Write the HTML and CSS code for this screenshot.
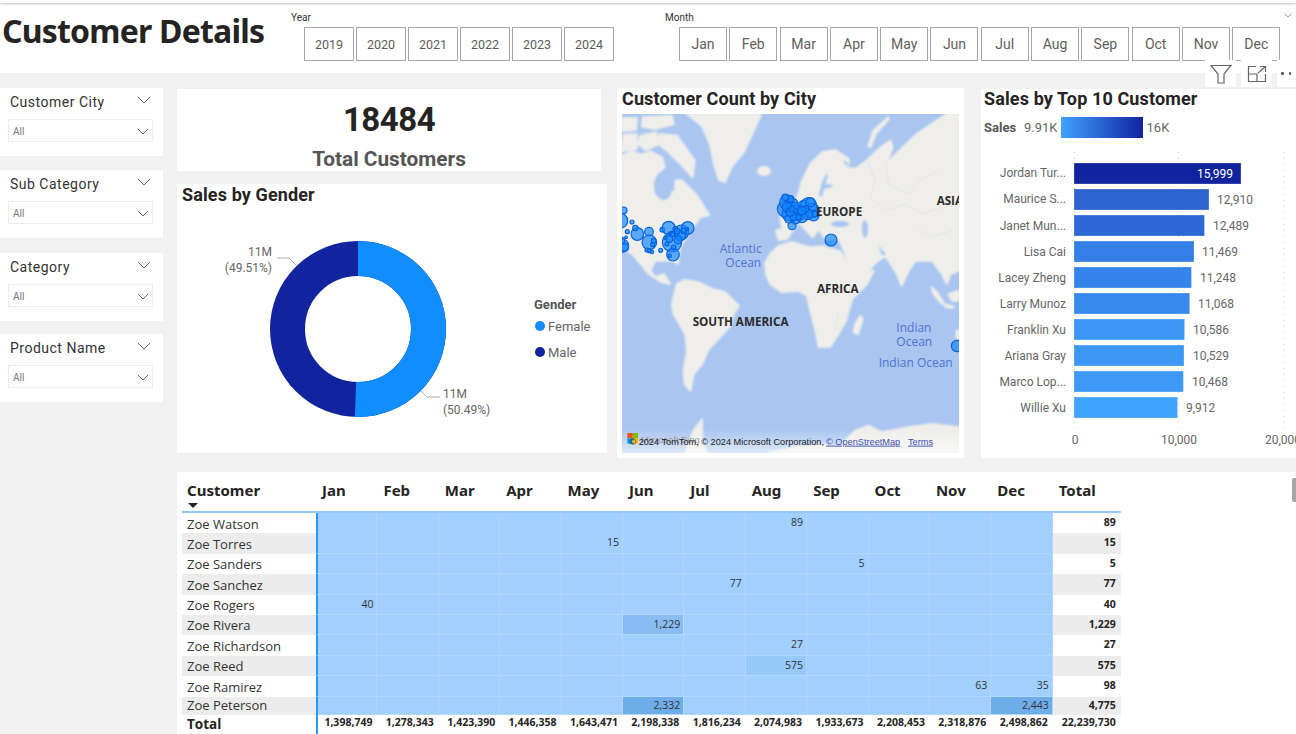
FILE: index.html
```html
<!DOCTYPE html>
<html lang="en">
<head>
<meta charset="utf-8">
<title>Customer Details</title>
<link rel="stylesheet" href="styles.css">
</head>
<body>
<div class="topstrip"></div>
<header class="header">
  <h1 class="page-title">Customer Details</h1>
  <section class="period period-year">
    <div class="period-label">Year</div>
    <div class="period-buttons">
      <div class="btn">2019</div><div class="btn">2020</div><div class="btn">2021</div><div class="btn">2022</div><div class="btn">2023</div><div class="btn">2024</div>
    </div>
  </section>
  <section class="period period-month">
    <div class="period-label">Month</div>
    <div class="period-buttons">
      <div class="btn">Jan</div><div class="btn">Feb</div><div class="btn">Mar</div><div class="btn">Apr</div><div class="btn">May</div><div class="btn">Jun</div><div class="btn">Jul</div><div class="btn">Aug</div><div class="btn">Sep</div><div class="btn">Oct</div><div class="btn">Nov</div><div class="btn">Dec</div>
    </div>
  </section>
  <svg class="header-chevron" width="8" height="5" viewBox="0 0 8 5"><polyline points="0.5,0.5 4,4 7.5,0.5"/></svg>
</header>

<div class="visual-tools">
  <div class="tool"><svg width="22" height="20" viewBox="0 0 22 20"><path d="M1 1.500H21L14 10V19H8V10Z"/></svg></div>
  <div class="tool"><svg width="20" height="18" viewBox="0 0 20 18"><path d="M9 1.500H1.500V16.500H18.500V9M1.500 9H10V16.500M11 8L18 2M13 1.500H18.500V7"/></svg></div>
  <div class="tool tool-more"><span class="dot"></span><span class="dot"></span><span class="dot"></span></div>
</div>

<main class="main">
  <aside class="sidebar">
    <div class="slicer">
      <div class="slicer-head"><span>Customer City</span><svg class="chev" width="14" height="8" viewBox="0 0 14 8"><polyline points="1,1 7,7 13,1"/></svg></div>
      <div class="slicer-box"><span>All</span><svg class="chev" width="12" height="7" viewBox="0 0 12 7"><polyline points="1,1 6,6 11,1"/></svg></div>
    </div>
    <div class="slicer">
      <div class="slicer-head"><span>Sub Category</span><svg class="chev" width="14" height="8" viewBox="0 0 14 8"><polyline points="1,1 7,7 13,1"/></svg></div>
      <div class="slicer-box"><span>All</span><svg class="chev" width="12" height="7" viewBox="0 0 12 7"><polyline points="1,1 6,6 11,1"/></svg></div>
    </div>
    <div class="slicer">
      <div class="slicer-head"><span>Category</span><svg class="chev" width="14" height="8" viewBox="0 0 14 8"><polyline points="1,1 7,7 13,1"/></svg></div>
      <div class="slicer-box"><span>All</span><svg class="chev" width="12" height="7" viewBox="0 0 12 7"><polyline points="1,1 6,6 11,1"/></svg></div>
    </div>
    <div class="slicer">
      <div class="slicer-head"><span>Product Name</span><svg class="chev" width="14" height="8" viewBox="0 0 14 8"><polyline points="1,1 7,7 13,1"/></svg></div>
      <div class="slicer-box"><span>All</span><svg class="chev" width="12" height="7" viewBox="0 0 12 7"><polyline points="1,1 6,6 11,1"/></svg></div>
    </div>
  </aside>

  <div class="content">
    <div class="upper">
      <div class="col-left">
        <section class="kpi">
          <div class="kpi-value">18484</div>
          <div class="kpi-label">Total Customers</div>
        </section>
        <section class="card gender">
          <h2 class="card-title">Sales by Gender</h2>
          <svg class="gender-svg" width="430" height="245" viewBox="0 0 430 245">
            <circle class="ring" cx="181" cy="121" r="70.500" stroke="#12239e"/>
            <circle class="ring" cx="181" cy="121" r="70.500" stroke="#118dff" stroke-dasharray="223.700 443" transform="rotate(-90 181 121)"/>
            <polyline class="leader" points="100,50 112,50 119,57"/>
            <polyline class="leader" points="244,183 250,189 263,189"/>
            <text class="donut-label" x="95" y="48" text-anchor="end">11M</text>
            <text class="donut-label" x="95" y="64" text-anchor="end">(49.51%)</text>
            <text class="donut-label" x="266" y="190">11M</text>
            <text class="donut-label" x="266" y="206">(50.49%)</text>
            <text class="legend-title" x="357" y="101">Gender</text>
            <circle cx="363" cy="118" r="5" fill="#118dff"/>
            <text class="legend-item" x="371" y="123">Female</text>
            <circle cx="363" cy="144" r="5" fill="#12239e"/>
            <text class="legend-item" x="371" y="149">Male</text>
          </svg>
        </section>
      </div>

      <section class="card map-card">
        <h2 class="card-title">Customer Count by City</h2>
        <svg class="map" width="337" height="339" viewBox="0 0 1011 1017">
          <defs>
            <filter id="soft" x="-5%" y="-5%" width="110%" height="110%"><feGaussianBlur stdDeviation="2.500"/></filter>
            <linearGradient id="creditFade" x1="0" y1="0" x2="0" y2="1"><stop offset="0" stop-color="#fff" stop-opacity="0"/><stop offset="1" stop-color="#fff" stop-opacity=".6"/></linearGradient>
            <clipPath id="mapClip"><rect width="1011" height="1017"/></clipPath>
          </defs>
          <rect class="sea" width="1011" height="1017"/>
          <g class="land" filter="url(#soft)">
            <path d="M195,0 L240,36 264,90 276,150 291,198 309,204 330,156 366,114 390,60 414,9 416,0Z"/>
            <ellipse cx="426" cy="171" rx="18" ry="12"/>
            <path d="M0,125 L30,112 60,122 85,112 120,130 128,160 104,180 92,205 98,240 125,262 138,252 137,228 160,235 160,200 178,198 205,225 225,245 250,285 262,303 235,310 220,330 205,350 175,400 170,425 168,450 150,440 100,440 85,470 100,490 125,480 135,495 144,510 120,505 80,480 40,430 0,395Z"/>
            <path d="M112,60 L165,65 218,140 212,190 180,155 140,115 108,88Z"/>
            <path d="M55,65 L102,55 108,92 70,108 50,90Z"/>
            <path d="M0,12 L45,12 42,48 0,50Z"/>
            <path d="M62,10 L150,5 155,30 100,45 60,38Z"/>
            <path d="M5,62 L44,60 45,104 0,112Z"/>
            <path d="M154,553 L165,510 189,498 230,505 270,525 310,535 350,575 335,600 325,635 285,680 260,705 240,750 215,780 205,830 188,810 185,770 195,710 190,660 155,600 150,570Z"/>
            <path d="M429,448 L445,420 470,395 510,385 564,400 604,397 654,412 672,440 695,483 755,470 735,510 690,555 680,590 672,620 655,650 625,698 590,698 578,640 565,590 555,545 530,530 480,535 445,510 432,480Z"/>
            <path d="M462,350 L500,338 515,345 495,375 470,378Z"/>
            <path d="M475,310 L500,310 505,335 480,340Z"/>
            <path d="M510,345 L505,300 534,225 538,205 565,150 600,115 640,108 680,135 680,152 660,160 700,165 734,140 770,105 805,80 812,100 792,150 830,112 884,60 944,20 974,0 1011,0 1011,470 985,480 975,510 960,480 930,440 880,440 860,470 839,515 825,480 800,440 790,425 762,445 740,470 694,492 672,425 660,395 650,375 610,375 590,345 572,370 530,325Z"/>
            <path d="M929,520 L945,535 968,572 958,568 935,540Z"/>
            <path d="M980,540 L1011,530 1011,560 990,560Z"/>
            <path d="M972,572 L995,578 990,582 970,578Z"/>
            <path d="M1005,650 L1011,648 1011,675 1003,670Z"/>
            <path d="M715,605 L722,615 708,660 695,655 700,630Z"/>
            <path d="M190,1017 L215,950 240,915 240,980 255,1017Z"/>
            <path d="M440,1017 L520,1000 620,992 650,1000 700,950 740,935 780,955 860,940 930,930 1011,940 1011,1017Z"/>
            <path d="M739,95 L754,50 799,10 800,16 762,58 745,100Z"/>
          </g>
          <g class="sea" filter="url(#soft)">
            <ellipse cx="654" cy="330" rx="28" ry="9"/>
            <ellipse cx="729" cy="345" rx="9" ry="26"/>
            <path d="M590,245 L600,205 612,180 618,185 610,210 630,212 632,218 606,225 600,248Z"/>
            <path d="M664,138 L684,150 670,154Z"/>
            <ellipse cx="125" cy="222" rx="26" ry="34"/>
            <path d="M770,395 L792,420 780,425Z"/>
          </g>
          <g class="map-lines">
            <path d="M735,140 L760,200 745,250 790,290 850,270 900,300 960,280"/>
            <path d="M792,150 L800,210 860,240 890,200 950,170"/>
            <path d="M880,340 L930,370 990,350"/>
            <path d="M650,590 L640,650 660,640"/>
            <path d="M230,600 L255,620 290,600"/>
          </g>
          <text class="ocean" x="293" y="418">Atlantic</text>
          <text class="ocean" x="310" y="460">Ocean</text>
          <text class="ocean" x="823" y="653">Indian</text>
          <text class="ocean" x="823" y="695">Ocean</text>
          <text class="ocean" x="770" y="758">Indian Ocean</text>
          <g class="bubbles" clip-path="url(#mapClip)">
            <circle cx="5" cy="289" r="10"/><circle cx="-5" cy="320" r="22"/><circle cx="30" cy="324" r="6"/><circle cx="16" cy="353" r="6"/><circle cx="46" cy="360" r="19"/><circle cx="40" cy="342" r="8"/><circle cx="81" cy="353" r="13"/><circle cx="82" cy="385" r="22"/><circle cx="95" cy="380" r="7"/><circle cx="92" cy="392" r="6"/><circle cx="75" cy="408" r="6"/><circle cx="82" cy="410" r="6"/><circle cx="90" cy="414" r="5"/><circle cx="116" cy="409" r="6"/><circle cx="121" cy="347" r="7"/><circle cx="140" cy="342" r="20"/><circle cx="178" cy="355" r="22"/><circle cx="197" cy="342" r="19"/><circle cx="150" cy="385" r="29"/><circle cx="153" cy="422" r="19"/><circle cx="143" cy="425" r="5"/><circle cx="175" cy="365" r="16"/><circle cx="160" cy="345" r="7"/><circle cx="195" cy="345" r="5"/><circle cx="130" cy="372" r="5"/><circle cx="150" cy="360" r="8"/><circle cx="155" cy="400" r="7"/><circle cx="135" cy="390" r="6"/><circle cx="165" cy="352" r="9"/><circle cx="185" cy="350" r="8"/><circle cx="143" cy="358" r="4"/><circle cx="168" cy="378" r="12"/><circle cx="142" cy="375" r="10"/><circle cx="0" cy="395" r="20"/><circle cx="8" cy="400" r="12"/><circle cx="-2" cy="380" r="10"/><circle cx="12" cy="370" r="4"/>
            <circle cx="490" cy="285" r="24"/><circle cx="495" cy="265" r="22"/><circle cx="500" cy="300" r="20"/><circle cx="515" cy="290" r="24"/><circle cx="510" cy="270" r="18"/><circle cx="530" cy="300" r="20"/><circle cx="545" cy="280" r="20"/><circle cx="560" cy="275" r="24"/><circle cx="570" cy="290" r="22"/><circle cx="575" cy="305" r="16"/><circle cx="555" cy="300" r="17"/><circle cx="540" cy="310" r="16"/><circle cx="520" cy="315" r="15"/><circle cx="510" cy="335" r="12"/><circle cx="500" cy="315" r="12"/><circle cx="525" cy="285" r="12"/><circle cx="535" cy="295" r="10"/><circle cx="505" cy="255" r="10"/><circle cx="580" cy="300" r="9"/><circle cx="550" cy="285" r="10"/><circle cx="565" cy="265" r="14"/><circle cx="490" cy="250" r="10"/><circle cx="515" cy="310" r="10"/><circle cx="495" cy="280" r="14"/><circle cx="505" cy="295" r="12"/><circle cx="520" cy="275" r="11"/><circle cx="540" cy="290" r="12"/><circle cx="510" cy="285" r="9"/><circle cx="530" cy="310" r="8"/>
            <circle cx="627" cy="378" r="18"/><circle cx="1005" cy="696" r="17"/>
          </g>
          <text class="region" x="582" y="305">EUROPE</text>
          <text class="region" x="944" y="272">ASIA</text>
          <text class="region" x="585" y="538">AFRICA</text>
          <text class="region" x="212" y="637">SOUTH AMERICA</text>
          <rect y="945" width="1011" height="72" fill="url(#creditFade)"/>
          <rect x="16" y="957" width="16" height="16" fill="#f25022"/><rect x="32" y="957" width="16" height="16" fill="#7fba00"/><rect x="16" y="973" width="16" height="16" fill="#00a4ef"/><rect x="32" y="973" width="16" height="16" fill="#ffb900"/>
          <text class="bing" x="56" y="986">Microsoft Bing</text>
          <text class="credit" x="22" y="992">© 2024 TomTom, © 2024 Microsoft Corporation,</text>
          <text class="credit-link" x="612" y="992">© OpenStreetMap</text>
          <text class="credit-link" x="858" y="992">Terms</text>
        </svg>
      </section>

      <section class="card bars-card">
        <h2 class="card-title">Sales by Top 10 Customer</h2>
        <div class="bars-legend">
          <span class="bars-legend-name">Sales</span>
          <span>9.91K</span>
          <span class="gradient"></span>
          <span>16K</span>
        </div>
        <svg class="bars-svg" width="315" height="312" viewBox="0 0 315 312">
          <g class="grid"><line x1="93.500" y1="7" x2="93.500" y2="285"/><line x1="197.500" y1="7" x2="197.500" y2="285"/><line x1="302.500" y1="7" x2="302.500" y2="285"/></g>
          <g class="bars">
            <rect x="93" y="18" width="167" height="21" fill="#12239e"/>
            <rect x="93" y="44" width="135" height="21" fill="#2c63cf"/>
            <rect x="93" y="70" width="130.500" height="21" fill="#2d69d4"/>
            <rect x="93" y="96" width="120" height="21" fill="#337fe6"/>
            <rect x="93" y="122" width="117.500" height="21" fill="#3584e9"/>
            <rect x="93" y="148" width="115.700" height="21" fill="#3789ec"/>
            <rect x="93" y="174" width="110.600" height="21" fill="#3c96f5"/>
            <rect x="93" y="200" width="110" height="21" fill="#3c97f5"/>
            <rect x="93" y="226" width="109.400" height="21" fill="#3d98f6"/>
            <rect x="93" y="252" width="103.600" height="21" fill="#40a2ff"/>
          </g>
          <g class="bar-names">
            <text x="85" y="32">Jordan Tur...</text><text x="85" y="58">Maurice S...</text><text x="85" y="85">Janet Mun...</text><text x="85" y="111">Lisa Cai</text><text x="85" y="137">Lacey Zheng</text><text x="85" y="163">Larry Munoz</text><text x="85" y="189">Franklin Xu</text><text x="85" y="215">Ariana Gray</text><text x="85" y="241">Marco Lop...</text><text x="85" y="267">Willie Xu</text>
          </g>
          <text class="bar-inside" x="252" y="33" text-anchor="end">15,999</text>
          <g class="bar-values">
            <text x="236" y="59">12,910</text><text x="232" y="85">12,489</text><text x="221" y="111">11,469</text><text x="219" y="137">11,248</text><text x="217" y="163">11,068</text><text x="212" y="189">10,586</text><text x="212" y="215">10,529</text><text x="211" y="241">10,468</text><text x="205" y="267">9,912</text>
          </g>
          <g class="axis"><text x="94" y="299" text-anchor="middle">0</text><text x="198" y="299" text-anchor="middle">10,000</text><text x="284" y="299">20,000</text></g>
        </svg>
      </section>
    </div>

    <section class="matrix-card">
      <div class="matrix">
        <div class="mrow mhead">
          <div class="mh-name">Customer<span class="sort"></span></div>
          <div>Jan</div><div>Feb</div><div>Mar</div><div>Apr</div><div>May</div><div>Jun</div><div>Jul</div><div>Aug</div><div>Sep</div><div>Oct</div><div>Nov</div><div>Dec</div><div>Total</div>
        </div>
        <div class="mbody">
          <div class="mrow"><div class="n">Zoe Watson</div><div class="c first"></div><div class="c"></div><div class="c"></div><div class="c"></div><div class="c"></div><div class="c"></div><div class="c"></div><div class="c">89</div><div class="c"></div><div class="c"></div><div class="c"></div><div class="c"></div><div class="t">89</div></div>
          <div class="mrow"><div class="n">Zoe Torres</div><div class="c first"></div><div class="c"></div><div class="c"></div><div class="c"></div><div class="c">15</div><div class="c"></div><div class="c"></div><div class="c"></div><div class="c"></div><div class="c"></div><div class="c"></div><div class="c"></div><div class="t">15</div></div>
          <div class="mrow"><div class="n">Zoe Sanders</div><div class="c first"></div><div class="c"></div><div class="c"></div><div class="c"></div><div class="c"></div><div class="c"></div><div class="c"></div><div class="c"></div><div class="c">5</div><div class="c"></div><div class="c"></div><div class="c"></div><div class="t">5</div></div>
          <div class="mrow"><div class="n">Zoe Sanchez</div><div class="c first"></div><div class="c"></div><div class="c"></div><div class="c"></div><div class="c"></div><div class="c"></div><div class="c">77</div><div class="c"></div><div class="c"></div><div class="c"></div><div class="c"></div><div class="c"></div><div class="t">77</div></div>
          <div class="mrow"><div class="n">Zoe Rogers</div><div class="c first">40</div><div class="c"></div><div class="c"></div><div class="c"></div><div class="c"></div><div class="c"></div><div class="c"></div><div class="c"></div><div class="c"></div><div class="c"></div><div class="c"></div><div class="c"></div><div class="t">40</div></div>
          <div class="mrow"><div class="n">Zoe Rivera</div><div class="c first"></div><div class="c"></div><div class="c"></div><div class="c"></div><div class="c"></div><div class="c heat-2">1,229</div><div class="c"></div><div class="c"></div><div class="c"></div><div class="c"></div><div class="c"></div><div class="c"></div><div class="t">1,229</div></div>
          <div class="mrow"><div class="n">Zoe Richardson</div><div class="c first"></div><div class="c"></div><div class="c"></div><div class="c"></div><div class="c"></div><div class="c"></div><div class="c"></div><div class="c">27</div><div class="c"></div><div class="c"></div><div class="c"></div><div class="c"></div><div class="t">27</div></div>
          <div class="mrow"><div class="n">Zoe Reed</div><div class="c first"></div><div class="c"></div><div class="c"></div><div class="c"></div><div class="c"></div><div class="c"></div><div class="c"></div><div class="c heat-1">575</div><div class="c"></div><div class="c"></div><div class="c"></div><div class="c"></div><div class="t">575</div></div>
          <div class="mrow"><div class="n">Zoe Ramirez</div><div class="c first"></div><div class="c"></div><div class="c"></div><div class="c"></div><div class="c"></div><div class="c"></div><div class="c"></div><div class="c"></div><div class="c"></div><div class="c"></div><div class="c">63</div><div class="c">35</div><div class="t">98</div></div>
          <div class="mrow mrow-cut"><div class="n">Zoe Peterson</div><div class="c first"></div><div class="c"></div><div class="c"></div><div class="c"></div><div class="c"></div><div class="c heat-3">2,332</div><div class="c"></div><div class="c"></div><div class="c"></div><div class="c"></div><div class="c"></div><div class="c heat-3">2,443</div><div class="t">4,775</div></div>
        </div>
        <div class="mrow mtotal">
          <div class="n">Total</div><div class="v first">1,398,749</div><div class="v">1,278,343</div><div class="v">1,423,390</div><div class="v">1,446,358</div><div class="v">1,643,471</div><div class="v">2,198,338</div><div class="v">1,816,234</div><div class="v">2,074,983</div><div class="v">1,933,673</div><div class="v">2,208,453</div><div class="v">2,318,876</div><div class="v">2,498,862</div><div class="v">22,239,730</div>
        </div>
      </div>
      <div class="scroll-thumb"></div>
    </section>
  </div>
</main>
</body>
</html>
```
FILE: styles.css
```css
* { box-sizing: border-box; }
html, body { margin: 0; height: 100%; }
body {
  width: 1296px; height: 734px; overflow: hidden; position: relative;
  background: #f1f1f1; color: #252423;
  font-family: Roboto, "Liberation Sans", sans-serif;
  display: flex; flex-direction: column;
}
h1, h2 { margin: 0; }

.topstrip { height: 3px; background: #fff; box-shadow: 0 1px 3px rgba(0,0,0,.25); position: relative; z-index: 1; flex: none; }

.header { height: 70px; flex: none; background: #fff; display: flex; position: relative; }
.page-title {
  font-family: "Noto Sans", sans-serif; font-weight: 700; font-size: 32px; letter-spacing: -.8px; line-height: 44px;
  margin: 6px 0 0 2px; width: 284px; white-space: nowrap; color: #252423;
}
.period { padding-top: 8px; }
.period-year { width: 374px; margin-left: 5px; }
.period-label { font-size: 10px; line-height: 13px; color: #333; }
.period-buttons { display: flex; margin-top: 3px; }
.period-year .period-buttons { margin-left: 13px; gap: 2px; }
.period-month .period-buttons { margin-left: 14px; gap: 2.300px; }
.btn {
  height: 34px; border: 1.500px solid #a6a6a6; background: #fff; color: #605e5c;
  display: flex; align-items: center; justify-content: center; font-size: 13px;
}
.period-year .btn { width: 50px; font-size: 12.500px; }
.period-month .btn { width: 48px; font-size: 14px; }
.header-chevron { position: absolute; right: 4px; top: 10px; fill: none; stroke: #9a9a9a; stroke-width: 1; }

.visual-tools { position: absolute; top: 60px; right: 0; display: flex; gap: 5px; z-index: 3; }
.tool { width: 31px; height: 27px; background: #fff; display: flex; align-items: center; justify-content: center; }
.tool svg { fill: none; stroke: #666; stroke-width: 1.200; }
.tool-more { width: 19px; gap: 5px; justify-content: flex-start; padding-left: 4px; }
.dot { width: 2.500px; height: 2.500px; background: #555; border-radius: 50%; flex: none; }

.main { flex: 1; display: flex; min-height: 0; }

.sidebar { width: 163px; flex: none; padding-top: 15px; display: flex; flex-direction: column; gap: 14px; }
.slicer { height: 68px; background: #fff; padding: 6px 10px 0 8px; }
.slicer:nth-child(3) { margin-top: 1px; }
.slicer:nth-child(4) { margin-top: -1px; }
.slicer-head { display: flex; justify-content: space-between; align-items: flex-start; padding: 0 2px 0 2px; height: 25px; font-size: 14px; letter-spacing: .5px; line-height: 17px; color: #333; }
.slicer-head .chev { margin-top: 2px; }
.chev { fill: none; stroke: #666; stroke-width: 1; flex: none; }
.slicer-box {
  height: 23px; border: 1.500px solid #ececec; display: flex; justify-content: space-between; align-items: center;
  padding: 1px 3px 0 4px; font-size: 10px; color: #777;
}

.content { flex: 1; min-width: 0; margin-left: 14px; display: flex; flex-direction: column; }
.upper { display: flex; height: 385px; flex: none; }
.col-left { width: 430px; flex: none; padding-top: 16px; display: flex; flex-direction: column; gap: 13px; }

.kpi { width: 424px; height: 82px; background: #fff; text-align: center; flex: none; }
.kpi-value { font-weight: 700; font-size: 33px; letter-spacing: -.5px; line-height: 38px; padding-top: 12px; height: 57px; color: #252423; }
.kpi-label { font-weight: 700; font-size: 20.800px; line-height: 26px; color: #555; }

.card { background: #fff; }
.card-title { font-size: 18px; font-weight: 700; letter-spacing: .12px; line-height: 22px; color: #252423; padding-left: 5px; }
.gender { height: 269px; flex: none; }
.gender-svg { display: block; margin-top: 2px; }
.ring { fill: none; stroke-width: 35; }
.leader { fill: none; stroke: #aaa; stroke-width: 1; }
.donut-label { font-size: 12px; fill: #666; }
.legend-title { font-size: 13px; font-weight: 700; fill: #555; }
.legend-item { font-size: 13px; fill: #666; }

.map-card { width: 347px; height: 370px; margin: 15px 0 0 10px; flex: none; padding: 0 5px; }
.map-card .card-title { padding: 0; height: 26px; line-height: 22px; }
.map { display: block; }
.sea { fill: #a9c5f0; }
.land { fill: #efeeea; stroke: #efeeea; stroke-width: 6; stroke-linejoin: round; }
.map-lines { fill: none; stroke: #dfe1e6; stroke-width: 2; }
.ocean { font-family: "Open Sans", sans-serif; font-size: 36px; fill: #5273cf; }
.region { font-family: "Open Sans", sans-serif; font-size: 35px; font-weight: 700; fill: #2b2b2b; }
.bubbles circle { fill: rgba(17,135,255,.68); stroke: #0a62dc; stroke-width: 3.500; }
.bing { font-family: "Liberation Sans", sans-serif; font-size: 28px; fill: #999; }
.credit { font-family: "Liberation Sans", sans-serif; font-size: 27.600px; fill: #222; }
.credit-link { font-family: "Liberation Sans", sans-serif; font-size: 27.600px; fill: #3d4fb0; text-decoration: underline; }

.bars-card { flex: 1; min-width: 0; height: 369px; margin: 16px 0 0 17px; overflow: hidden; }
.bars-card .card-title { padding-left: 3px; margin-top: -1px; }
.bars-legend { display: flex; align-items: center; height: 21px; margin-top: 7px; padding-left: 3px; font-size: 13px; color: #666; }
.bars-legend-name { font-weight: 700; color: #555; font-size: 13px; width: 40px; }
.gradient { width: 82px; height: 21px; background: linear-gradient(90deg, #40a2ff, #12239e); margin: 0 4px 0 3px; }
.bars-svg { display: block; margin-top: 7px; }
.grid line { stroke: #ccc; stroke-width: 1; stroke-dasharray: 1 5; }
.bars rect { stroke: rgba(255,255,255,.28); stroke-width: 1; }
.bar-names text { font-size: 12px; fill: #666; text-anchor: end; }
.bar-values text, .axis text { font-size: 12px; fill: #666; }
.bar-inside { font-size: 12px; fill: #fff; }

.matrix-card { flex: 1; min-height: 0; margin-top: 14px; background: #fff; padding-left: 5px; position: relative; overflow: hidden; }
.matrix { width: 939px; }
.mrow { display: grid; grid-template-columns: 134px repeat(12, 61.400px) 68px; height: 20.400px; }
.mhead { height: 41px; padding-top: 8px; border-bottom: 2px solid #91c6ff; font-family: "Noto Sans", sans-serif; font-weight: 700; font-size: 15px; line-height: 20px; color: #252423; }
.mhead > div { padding-left: 6px; }
.mhead > .mh-name { padding-left: 5px; position: relative; }
.sort { position: absolute; left: 6px; top: 23px; border: 5.500px solid transparent; border-top: 5px solid #252423; border-bottom: 0; }
.n { padding-left: 5px; padding-top: .5px; font-family: "Open Sans", sans-serif; font-size: 13px; line-height: 20px; color: #333; white-space: nowrap; }
.c { background: #a1cfff; border-right: 1px solid #b0d7ff; border-bottom: 1px solid #b0d7ff; text-align: right; padding: 0 3px 0 0; font-family: "Open Sans", sans-serif; font-size: 10.500px; line-height: 18px; color: #333; }
.first { border-left: 2px solid #2a95ff; }
.t { text-align: right; padding-right: 5px; font-family: "Open Sans", sans-serif; font-size: 10.500px; font-weight: 700; line-height: 18px; color: #252423; }
.mbody .mrow:nth-child(even) .n, .mbody .mrow:nth-child(even) .t { background: #ececec; }
.heat-1 { background: #96c8f8; }
.heat-2 { background: #88bcf3; }
.heat-3 { background: #6fadea; }
.mrow-cut { height: 17px; }
.mrow-cut .n { padding-top: 0; line-height: 17px; }
.mrow-cut .c, .mrow-cut .t { line-height: 17px; }
.mtotal { height: 21px; }
.mtotal .n { font-weight: 700; font-size: 13.500px; padding-top: 0; color: #252423; }
.v { text-align: right; padding-right: 5px; font-family: "Open Sans", sans-serif; font-size: 10.500px; font-weight: 700; line-height: 17px; color: #252423; white-space: nowrap; }
.scroll-thumb { position: absolute; top: 6px; right: 0; width: 4px; height: 24px; background: #a6a6a6; border-radius: 2px 0 0 2px; }
```
